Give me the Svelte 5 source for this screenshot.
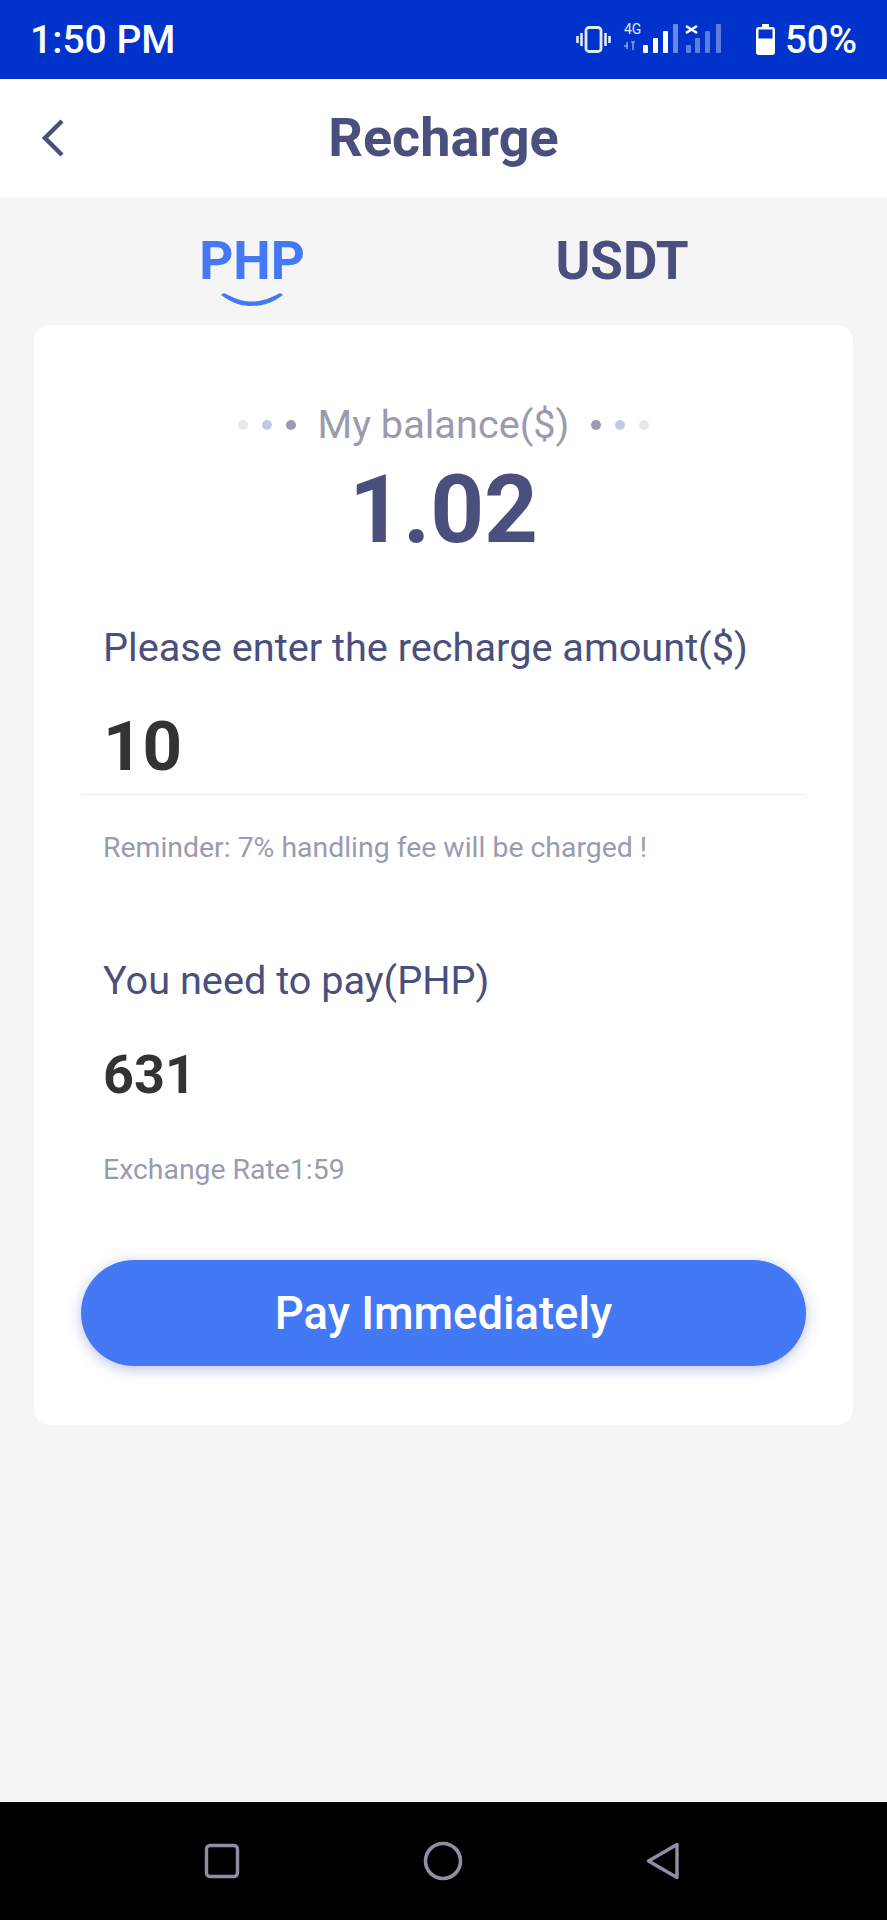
<script lang="ts">
	const dots = ['#e6e7ef', '#c3c9e2', '#9a9bb0'];
</script>

<div class="screen">
	<div class="status">
		<span class="time">1:50 PM</span>
		<div class="status-right">
			<svg class="vibrate" width="35" height="27" viewBox="0 0 35 27" fill="none" stroke="#e4e9fb">
				<rect x="10" y="1.500" width="15" height="24" rx="3" stroke-width="2.800" />
				<path d="M5.500 7v13M1.500 10v7M29.500 7v13M33.500 10v7" stroke-width="2.600" />
			</svg>
			<svg class="signal" width="98" height="32" viewBox="0 0 98 32">
				<text x="1" y="12" class="net">4G</text>
				<path d="M1 24h4M4 20v7M10 20v8M8 20h4" stroke="#8fa3e6" stroke-width="1.500" fill="none" />
				<g fill="#fff">
					<rect x="20" y="23" width="5" height="8" rx="1" />
					<rect x="30" y="16" width="5" height="15" rx="1" />
					<rect x="40" y="9" width="5" height="22" rx="1" />
				</g>
				<rect x="50" y="2" width="5" height="29" rx="1" fill="#6d88e2" />
				<path d="M63 4l11 7M74 4l-11 7" stroke="#fff" stroke-width="2.600" />
				<g fill="#5f7ddf">
					<rect x="63" y="23" width="5" height="8" rx="1" />
					<rect x="72" y="16" width="5" height="15" rx="1" />
					<rect x="82" y="9" width="5" height="22" rx="1" />
					<rect x="93" y="2" width="5" height="29" rx="1" />
				</g>
			</svg>
			<svg class="battery" width="19" height="31" viewBox="0 0 19 31">
				<path d="M6 0h7v3h3a3 3 0 0 1 3 3v22a3 3 0 0 1-3 3H3a3 3 0 0 1-3-3V6a3 3 0 0 1 3-3h3z" fill="#fff" />
				<rect x="2.500" y="5.500" width="14" height="9" fill="#0033cc" />
			</svg>
			<span class="percent">50%</span>
		</div>
	</div>

	<header class="bar">
		<svg class="back" width="26" height="38" viewBox="0 0 26 38" fill="none">
			<path d="M24 2 7 19l17 17" stroke="#4a4f7d" stroke-width="4.500" />
		</svg>
		<h1>Recharge</h1>
	</header>

	<main class="content">
		<div class="tabs">
			<div class="tab active">
				PHP
				<svg class="smile" width="62" height="13" viewBox="0 0 62 13">
					<path d="M0 2C12 11 22 13 31 13 40 13 50 11 62 2L59 0C48 6 40 8.500 31 8.500 22 8.500 14 6 3 0Z" fill="#4479f6" />
				</svg>
			</div>
			<div class="tab">USDT</div>
		</div>

		<section class="card">
			<div class="balance-label">
				<span class="dots">
					{#each dots as c}<i style="background:{c}"></i>{/each}
				</span>
				<span>My balance($)</span>
				<span class="dots">
					{#each [...dots].reverse() as c}<i style="background:{c}"></i>{/each}
				</span>
			</div>
			<div class="balance">1.02</div>

			<div class="label first">Please enter the recharge amount($)</div>
			<div class="amount">10</div>
			<div class="note reminder">Reminder: 7% handling fee will be charged !</div>

			<div class="label pay">You need to pay(PHP)</div>
			<div class="total">631</div>
			<div class="note rate">Exchange Rate1:59</div>

			<button class="submit">Pay Immediately</button>
		</section>
	</main>

	<nav class="nav">
		<svg width="36" height="36" viewBox="0 0 36 36" fill="none" stroke="#8e8fa6" stroke-width="3.400">
			<rect x="2.500" y="2.500" width="31" height="31" rx="3.500" />
		</svg>
		<svg width="40" height="40" viewBox="0 0 40 40" fill="none" stroke="#8e8fa6" stroke-width="3.600">
			<circle cx="20" cy="20" r="17.500" />
		</svg>
		<svg width="34" height="38" viewBox="0 0 34 38" fill="none" stroke="#8e8fa6" stroke-width="3.400" stroke-linejoin="round">
			<path d="M31 2.500v33L2.500 19z" />
		</svg>
	</nav>
</div>

<style>
	:global(body) {
		margin: 0;
	}
	.screen {
		width: 887px;
		height: 1920px;
		display: flex;
		flex-direction: column;
		background: #f5f5f6;
		font-family: Roboto, "Liberation Sans", sans-serif;
	}
	.status {
		height: 79px;
		flex: none;
		background: #0033cc;
		color: #fff;
		display: flex;
		align-items: center;
		justify-content: space-between;
		padding: 0 30px;
		box-sizing: border-box;
	}
	.time {
		font-size: 39px;
		font-weight: 500;
	}
	.status-right {
		display: flex;
		align-items: center;
	}
	.vibrate {
		margin-right: 12px;
	}
	.signal {
		margin-right: 35px;
		margin-top: -3px;
		overflow: visible;
	}
	.net {
		font-size: 14px;
		fill: #e4e9fb;
	}
	.battery {
		margin-right: 10px;
		margin-top: -1px;
	}
	.percent {
		font-size: 38.500px;
		font-weight: 500;
	}
	.bar {
		height: 118px;
		flex: none;
		background: #fff;
		display: flex;
		align-items: center;
		justify-content: center;
		position: relative;
	}
	.back {
		position: absolute;
		left: 38px;
		top: 40px;
	}
	h1 {
		margin: 0 0 2px;
		font-size: 54px;
		font-weight: 700;
		color: #4a4f7d;
	}
	.content {
		flex: 1;
		padding: 0 34px;
	}
	.tabs {
		height: 128px;
		display: grid;
		grid-template-columns: 370px 370px;
		justify-content: center;
		margin-left: -13px;
	}
	.tab {
		font-size: 53px;
		font-weight: 700;
		color: #4a4f7d;
		text-align: center;
		padding-top: 33px;
		position: relative;
	}
	.tab.active {
		color: #4479f6;
	}
	.smile {
		position: absolute;
		left: 50%;
		top: 96px;
		transform: translateX(-50%);
	}
	.card {
		background: #fff;
		border-radius: 16px;
		height: 1100px;
		padding: 0 47px;
		box-sizing: border-box;
		display: flex;
		flex-direction: column;
	}
	.balance-label {
		display: flex;
		justify-content: center;
		align-items: center;
		gap: 22px;
		margin-top: 77px;
		font-size: 39.700px;
		line-height: 46px;
		color: #9a9bb0;
	}
	.dots {
		display: flex;
		gap: 14px;
	}
	.dots i {
		width: 10px;
		height: 10px;
		border-radius: 50%;
	}
	.balance {
		text-align: center;
		font-size: 94px;
		line-height: 100px;
		font-weight: 700;
		color: #4a4f7d;
		margin-top: 12px;
	}
	.label {
		font-size: 39.700px;
		line-height: 44px;
		color: #4a4f7d;
		padding-left: 22px;
	}
	.label.first {
		margin-top: 66px;
	}
	.amount {
		font-size: 69px;
		line-height: 80px;
		font-weight: 700;
		color: #333;
		padding: 37px 0 7px 22px;
		border-bottom: 1px solid #ececf0;
	}
	.note {
		font-size: 28.400px;
		line-height: 34px;
		color: #9a9bb0;
		padding-left: 22px;
	}
	.reminder {
		margin-top: 36px;
	}
	.label.pay {
		margin-top: 94px;
	}
	.total {
		font-size: 54px;
		line-height: 64px;
		font-weight: 700;
		color: #333;
		padding-left: 22px;
		margin-top: 40px;
	}
	.rate {
		margin-top: 46px;
	}
	.submit {
		margin-top: 73px;
		height: 106px;
		border: none;
		border-radius: 53px;
		background: #4479f6;
		color: #fff;
		font-family: inherit;
		font-size: 45.400px;
		font-weight: 500;
		box-shadow: 0 3px 14px rgba(60, 80, 180, 0.35);
	}
	.nav {
		height: 118px;
		flex: none;
		background: #000;
		display: flex;
		align-items: center;
		padding: 0 0 0 204px;
	}
	.nav svg:nth-child(2) {
		margin-left: 183px;
	}
	.nav svg:nth-child(3) {
		margin-left: 183px;
	}
</style>
